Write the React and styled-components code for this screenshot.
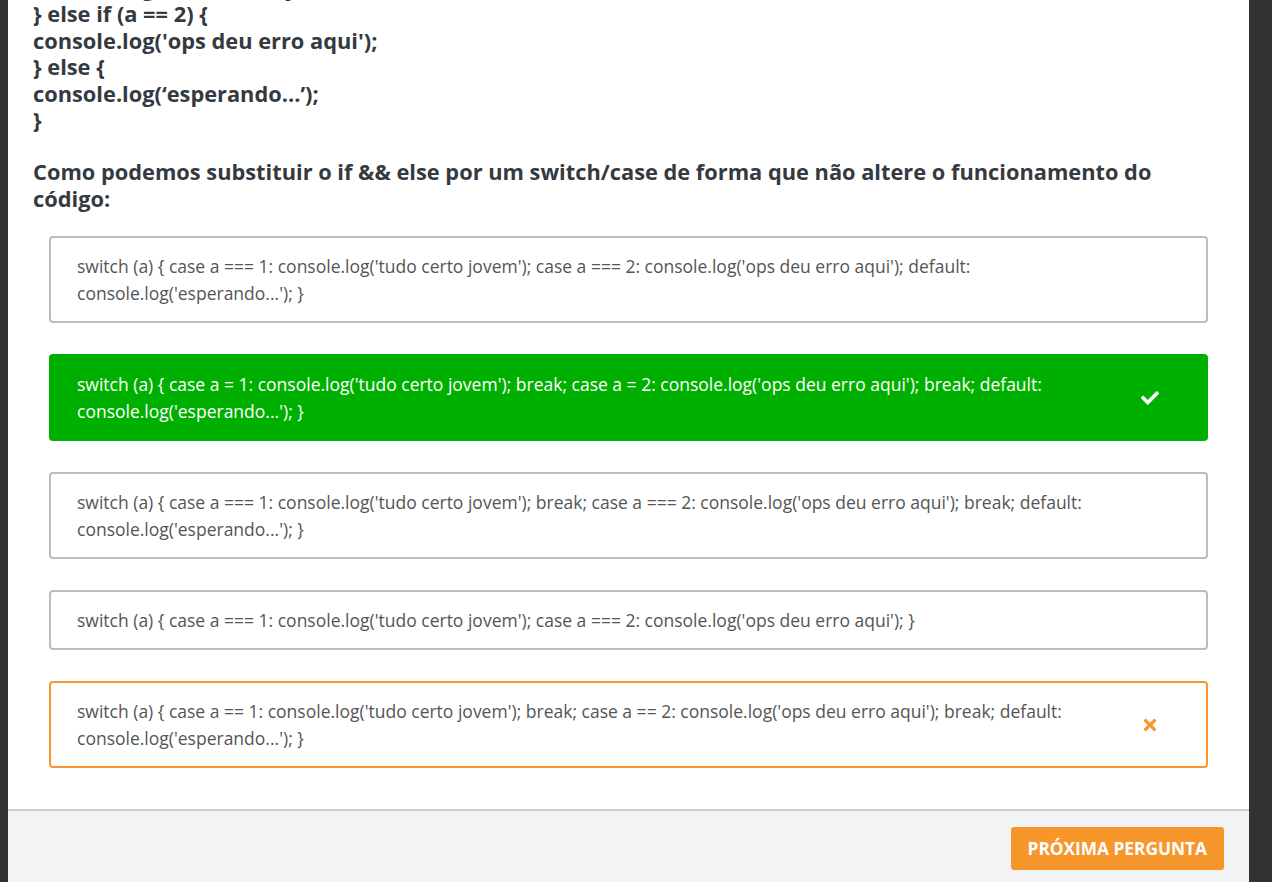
import React from 'react';
import styled, { createGlobalStyle } from 'styled-components';
import { FaCheck, FaTimes } from 'react-icons/fa';

const GlobalStyle = createGlobalStyle`
  html, body {
    margin: 0;
    padding: 0;
    background: #323232;
    overflow: hidden;
  }
  * {
    box-sizing: border-box;
  }
`;

const Page = styled.div`
  padding: 0 23px 0 8px;
  height: 882px;
  font-family: "Open Sans", "Noto Sans", sans-serif;
`;

const Panel = styled.div`
  background: #fff;
  height: 100%;
  display: flex;
  flex-direction: column;
  overflow: hidden;
`;

const Content = styled.div`
  padding: 0 25px 41px;
`;

const Code = styled.div`
  margin-top: -25px;
  font-size: 21.8px;
  font-weight: 700;
  line-height: 26.4px;
  color: #343a40;
`;

const Question = styled.h2`
  margin: 25px 0 0;
  font-size: 21.8px;
  font-weight: 700;
  line-height: 27px;
  color: #343a40;
`;

const Options = styled.div`
  margin: 24px 16px 0;
  display: flex;
  flex-direction: column;
  gap: 31px;
`;

const tones = {
  idle: { bg: '#fff', border: '#b6bdc4', color: '#555' },
  right: { bg: '#00b000', border: '#00b000', color: '#fff' },
  wrong: { bg: '#fff', border: '#f7962b', color: '#555' },
};

const Option = styled.div`
  display: flex;
  align-items: center;
  padding: 14.5px 26px;
  border: 2px solid ${(p) => tones[p.$tone].border};
  border-radius: 4px;
  background: ${(p) => tones[p.$tone].bg};
  color: ${(p) => tones[p.$tone].color};
  font-size: 17.5px;
  line-height: 27px;
`;

const OptionText = styled.div`
  flex: 1;
  padding-right: 20px;
`;

const Mark = styled.span`
  width: 40px;
  display: flex;
  justify-content: center;
  font-size: 18px;
  color: ${(p) => (p.$tone === 'wrong' ? '#f7962b' : '#fff')};
  margin-right: 10px;
`;

const Footer = styled.div`
  flex: 1;
  border-top: 2px solid #c8ccd0;
  background: #f2f3f5;
  display: flex;
  justify-content: flex-end;
  align-items: flex-start;
  padding: 16px 25px;
`;

const NextButton = styled.button`
  border: none;
  border-radius: 3px;
  background: #f7962b;
  color: #fff;
  font-family: "Open Sans", "Noto Sans", sans-serif;
  font-weight: 700;
  font-size: 17.3px;
  height: 43px;
  padding: 0 17px;
  text-transform: uppercase;
  cursor: pointer;
`;

const options = [
  { text: "switch (a) { case a === 1: console.log('tudo certo jovem'); case a === 2: console.log('ops deu erro aqui'); default: console.log('esperando...'); }", tone: 'idle' },
  { text: "switch (a) { case a = 1: console.log('tudo certo jovem'); break; case a = 2: console.log('ops deu erro aqui'); break; default: console.log('esperando...'); }", tone: 'right' },
  { text: "switch (a) { case a === 1: console.log('tudo certo jovem'); break; case a === 2: console.log('ops deu erro aqui'); break; default: console.log('esperando...'); }", tone: 'idle' },
  { text: "switch (a) { case a === 1: console.log('tudo certo jovem'); case a === 2: console.log('ops deu erro aqui'); }", tone: 'idle' },
  { text: "switch (a) { case a == 1: console.log('tudo certo jovem'); break; case a == 2: console.log('ops deu erro aqui'); break; default: console.log('esperando...'); }", tone: 'wrong' },
];

export default function App() {
  return (
    <Page>
      <GlobalStyle />
      <Panel>
        <Content>
          <Code>
            <div>console.log('tudo certo jovem');</div>
            <div>{'} else if (a == 2) {'}</div>
            <div>console.log('ops deu erro aqui');</div>
            <div>{'} else {'}</div>
            <div>console.log(‘esperando...’);</div>
            <div>{'}'}</div>
          </Code>
          <Question>
            Como podemos substituir o if &amp;&amp; else por um switch/case de forma que não altere o funcionamento do código:
          </Question>
          <Options>
            {options.map((o, i) => (
              <Option key={i} $tone={o.tone}>
                <OptionText>{o.text}</OptionText>
                <Mark $tone={o.tone}>
                  {o.tone === 'right' && <FaCheck />}
                  {o.tone === 'wrong' && <FaTimes />}
                </Mark>
              </Option>
            ))}
          </Options>
        </Content>
        <Footer>
          <NextButton>Próxima pergunta</NextButton>
        </Footer>
      </Panel>
    </Page>
  );
}
